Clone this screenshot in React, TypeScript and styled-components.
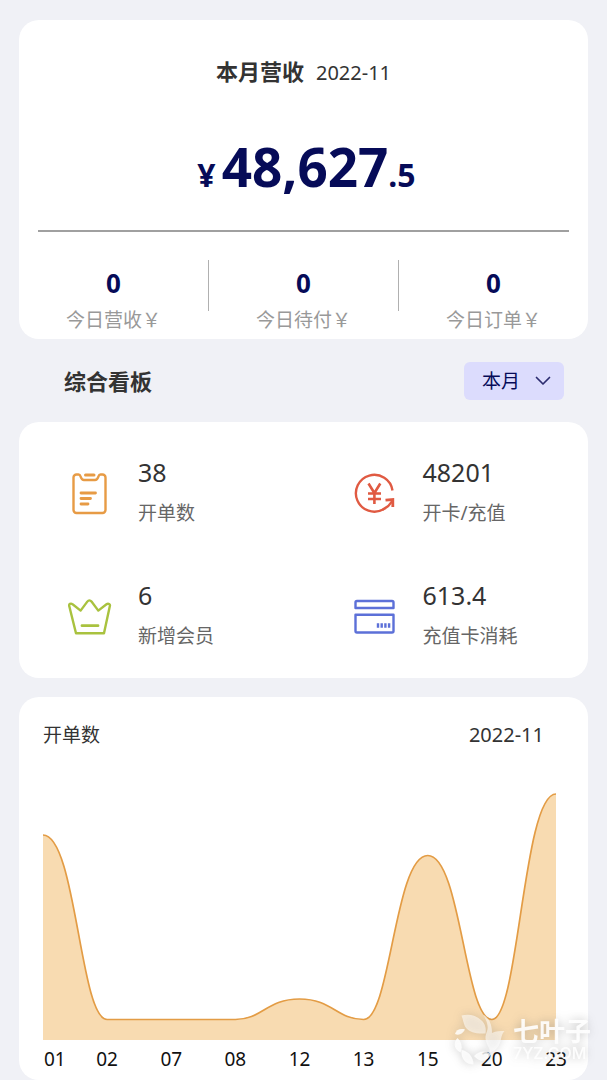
import React from "react";
import styled, { createGlobalStyle } from "styled-components";

const GlobalStyle = createGlobalStyle`
  * { box-sizing: border-box; }
  body {
    margin: 0;
    background: #f0f1f6;
    color: #333;
    font-family: "Noto Sans", "Noto Sans CJK SC", sans-serif;
  }
`;

const navy = "#060b58";

const Page = styled.main`
  padding: 20px 19px 0;
`;

const Card = styled.section`
  background: #fff;
  border-radius: 20px;
`;

const RevenueCard = styled(Card)`
  padding: 35px 0 3px;
`;

const RevenueTitle = styled.header`
  display: flex;
  justify-content: center;
  align-items: baseline;
  gap: 12px;
  line-height: 32px;
`;

const Heading = styled.h2`
  margin: 0;
  font-size: 22px;
  line-height: 32px;
  font-weight: 700;
`;

const Month = styled.time`
  font-size: 20px;
  line-height: 32px;
`;

const Amount = styled.p`
  display: flex;
  justify-content: center;
  align-items: baseline;
  margin: 43px 0 0;
  padding-left: 6px;
  color: ${navy};
  font-weight: 700;
  line-height: 70px;
`;

const AmountPart = styled.span<{ $size: number; $gap?: number }>`
  font-size: ${(p) => p.$size}px;
  margin-right: ${(p) => p.$gap ?? 0}px;
`;

const Rule = styled.hr`
  margin: 20px 19px 28px;
  border: 0;
  height: 2px;
  background: #a0a0a0;
`;

const TodayRow = styled.div`
  display: flex;
  align-items: flex-start;
`;

const TodayCell = styled.div`
  flex: 1;
  padding-top: 6px;
  text-align: center;
`;

const Divider = styled.span`
  width: 1px;
  height: 51px;
  background: #b0b0b0;
`;

const TodayValue = styled.div`
  color: ${navy};
  font-size: 26px;
  font-weight: 700;
  line-height: 34px;
`;

const TodayLabel = styled.div`
  color: #999;
  font-size: 19px;
  line-height: 32px;
  padding-top: 4px;
  white-space: nowrap;
`;

const BoardHeader = styled.header`
  display: flex;
  align-items: center;
  justify-content: space-between;
  height: 83px;
  padding: 0 24px 0 45px;
`;

const PeriodPicker = styled.label`
  display: grid;
  align-items: center;
  width: 100px;
  height: 38px;
  border-radius: 6px;
  background: #dcdcfd;

  & > * { grid-area: 1 / 1; }
  & > svg { justify-self: end; margin-right: 12px; pointer-events: none; }
`;

const PeriodSelect = styled.select`
  appearance: none;
  width: 100%;
  height: 100%;
  padding: 0 18px;
  border: 0;
  background: transparent;
  color: ${navy};
  font: inherit;
  font-size: 19px;
`;

const StatsCard = styled(Card)`
  display: grid;
  grid-template-columns: 1fr 1fr;
  row-gap: 41px;
  padding: 31px 0 20px;
`;

const Stat = styled.div`
  display: flex;
  align-items: center;
  gap: 26px;
  padding-left: 49px;
`;

const StatIcon = styled.svg`
  flex: none;
  width: 44px;
  height: 44px;
  fill: none;
  stroke-width: 2.4;
  stroke-linecap: round;
  stroke-linejoin: round;
`;

const StatValue = styled.div`
  font-size: 25px;
  line-height: 38px;
`;

const StatLabel = styled.div`
  color: #666;
  font-size: 19px;
  line-height: 44px;
  white-space: nowrap;
`;

const ChartCard = styled(Card)`
  margin-top: 19px;
  padding: 22px 32px 5px 24px;
`;

const ChartHeader = styled.header`
  display: flex;
  justify-content: space-between;
  padding-right: 12px;
  line-height: 32px;
`;

const ChartTitle = styled.h3`
  margin: 0;
  font-size: 19px;
  font-weight: 400;
`;

const Plot = styled.svg`
  display: block;
  width: 100%;
  height: 252px;
  margin-top: 37px;
`;

const Axis = styled.div`
  display: flex;
  justify-content: space-between;
  margin-right: -12px;
  padding-top: 3px;
  color: #111;
  font-size: 19px;
  line-height: 32px;
`;

const Tick = styled.span`
  width: 24px;
  text-align: center;

  &:first-child { width: 12px; padding-left: 1px; text-align: left; }
`;

const Watermark = styled.div`
  position: absolute;
  top: 1010px;
  right: 16px;
  display: flex;
  gap: 6px;
  color: rgba(255, 255, 255, 0.9);
  filter: drop-shadow(0 0 5px rgba(90, 90, 90, 0.4));
  pointer-events: none;
`;

const WatermarkText = styled.div`
  padding-top: 5px;
  font-size: 26px;
  font-weight: 700;
  line-height: 32px;

  small {
    display: block;
    font-family: Inter, sans-serif;
    font-size: 16px;
    font-weight: 500;
    line-height: 16px;
    margin-top: -2px;
  }
`;

const ClipboardIcon = () => (
  <StatIcon viewBox="0 0 44 44" stroke="#e79b45" aria-hidden="true">
    <path d="M8.5 2.500h2c1.600 0 1.800 1.200 2.300 2.600.7 2 1.500 2.900 3.200 2.900h11c1.700 0 2.500-.9 3.200-2.900.5-1.400.7-2.600 2.300-2.600h2a3 3 0 0 1 3 3v32.500a3 3 0 0 1-3 3h-26a3 3 0 0 1-3-3V5.500a3 3 0 0 1 3-3z" />
    <path d="M17.500 3h8.500" strokeWidth="3" />
    <path d="M13 21h14.500M13 26.500h9.500M13 32h7" strokeWidth="2.800" />
  </StatIcon>
);

const RechargeIcon = () => (
  <StatIcon viewBox="0 0 44 44" stroke="#e05a42" aria-hidden="true">
    <path d="M39.500 18.500A18.400 18.400 0 1 0 30.500 37.200" strokeLinecap="butt" />
    <path d="M30.500 37.200Q36 34.500 38.500 30" />
    <path d="M32.500 28.200l7.300-.7v7.500" strokeLinecap="butt" strokeLinejoin="miter" strokeWidth="2.800" />
    <path d="M15.500 11.500l5.900 9.500 5.900-9.500M21.400 21v11M15 21.500h13M15 27h13" strokeLinecap="butt" strokeWidth="2.600" />
  </StatIcon>
);

const CrownIcon = () => (
  <StatIcon viewBox="0 0 44 44" stroke="#a9c23f" aria-hidden="true">
    <path d="M8 38.300L1.300 11.300c-.7-2.300 1.500-3.500 3.300-2l8 6.300 6.700-9c1.300-1.700 2.900-1.700 4.200 0l6.800 9 8.200-6.300c1.800-1.400 4-.2 3.300 2L36 38.300z" />
    <path d="M14 30.700h16" strokeWidth="2.800" />
  </StatIcon>
);

const BankCardIcon = () => (
  <StatIcon viewBox="0 0 44 44" stroke="#5c70d8" aria-hidden="true">
    <path d="M2.500 13V7.500a1.500 1.500 0 0 1 1.500-1.500h35a1.500 1.500 0 0 1 1.500 1.500V13zM2.500 19.700h38v16.300a1.500 1.500 0 0 1-1.500 1.500H4a1.500 1.500 0 0 1-1.500-1.500z" />
    <path d="M25 28.300v4.500M28.700 28.300v4.500M32.400 28.300v4.500M36.100 28.300v4.500" strokeLinecap="butt" />
  </StatIcon>
);

const today = [
  { label: "今日营收￥", value: 0 },
  { label: "今日待付￥", value: 0 },
  { label: "今日订单￥", value: 0 },
];

const stats = [
  { value: "38", label: "开单数", Icon: ClipboardIcon },
  { value: "48201", label: "开卡/充值", Icon: RechargeIcon },
  { value: "6", label: "新增会员", Icon: CrownIcon },
  { value: "613.4", label: "充值卡消耗", Icon: BankCardIcon },
];

const orders = [
  { day: "01", count: 10 },
  { day: "02", count: 1 },
  { day: "07", count: 1 },
  { day: "08", count: 1 },
  { day: "12", count: 2 },
  { day: "13", count: 1 },
  { day: "15", count: 9 },
  { day: "20", count: 1 },
  { day: "23", count: 12 },
];

const STEP = 64;
const BASE = 252;
const UNIT = 20.5;

// Peaks get a longer handle than troughs, so crests are rounder than dips.
const curve = orders.reduce((path, { count }, i) => {
  const x = i * STEP;
  const y = BASE - count * UNIT;
  if (i === 0) return `M${x} ${y}`;
  const prev = orders[i - 1].count;
  const prevY = BASE - prev * UNIT;
  const out = prev > count ? 33 : 27;
  const into = count > prev ? 33 : 27;
  return `${path}C${x - STEP + out} ${prevY} ${x - into} ${y} ${x} ${y}`;
}, "");

const plotWidth = (orders.length - 1) * STEP;

export default function App() {
  return (
    <>
      <GlobalStyle />
      <Page>
        <RevenueCard>
          <RevenueTitle>
            <Heading>本月营收</Heading>
            <Month>2022-11</Month>
          </RevenueTitle>
          <Amount>
            <AmountPart $size={32} $gap={6}>¥</AmountPart>
            <AmountPart $size={53}>48,627</AmountPart>
            <AmountPart $size={32}>.5</AmountPart>
          </Amount>
          <Rule />
          <TodayRow>
            {today.map((item, i) => (
              <React.Fragment key={item.label}>
                {i > 0 && <Divider />}
                <TodayCell>
                  <TodayValue>{item.value}</TodayValue>
                  <TodayLabel>{item.label}</TodayLabel>
                </TodayCell>
              </React.Fragment>
            ))}
          </TodayRow>
        </RevenueCard>

        <BoardHeader>
          <Heading>综合看板</Heading>
          <PeriodPicker>
            <PeriodSelect aria-label="时间范围" defaultValue="month">
              <option value="month">本月</option>
            </PeriodSelect>
            <svg width="18" height="12" viewBox="0 0 18 12" fill="none" stroke="#2c2c70" strokeWidth="1.700" strokeLinecap="round" strokeLinejoin="round" aria-hidden="true">
              <path d="M2.500 2.500l6.500 6.500 6.500-6.500" />
            </svg>
          </PeriodPicker>
        </BoardHeader>

        <StatsCard>
          {stats.map(({ value, label, Icon }) => (
            <Stat key={label}>
              <Icon />
              <div>
                <StatValue>{value}</StatValue>
                <StatLabel>{label}</StatLabel>
              </div>
            </Stat>
          ))}
        </StatsCard>

        <ChartCard>
          <ChartHeader>
            <ChartTitle>开单数</ChartTitle>
            <Month>2022-11</Month>
          </ChartHeader>
          <Plot viewBox={`0 0 ${plotWidth} ${BASE}`} preserveAspectRatio="none" role="img" aria-label="开单数">
            <path d={`${curve}V${BASE}H0Z`} fill="#f8dbb1" />
            <path d={curve} fill="none" stroke="#e39c45" strokeWidth="1.700" vectorEffect="non-scaling-stroke" />
          </Plot>
          <Axis>
            {orders.map(({ day }) => (
              <Tick key={day}>{day}</Tick>
            ))}
          </Axis>
        </ChartCard>
      </Page>

      <Watermark>
        <svg width="56" height="58" viewBox="0 0 56 58" fill="currentColor" fillOpacity="0.6" aria-hidden="true">
          <path d="M10.500 5.500C17 3.500 25 5 30 10c4 3.500 5.500 8 4.500 13.500-9 .5-17-1-20.500-7-1.500-3-2-7-3.500-11z" />
          <path d="M32 4.500c6 3 9 10 9 18.500 4-2 8-2 12.500-2-3 3-3 7-4.500 12-2 5-5 8-10 9.500 0-5-4-8-4.500-14-.3-5 3-8 2-13-.5-4-2-7-4.500-11z" />
          <path d="M4 24c1-4 5-6 10-4.500-2 4-6 6.500-10 4.500z" fillOpacity="0.9" />
          <path d="M6.500 28c4 4 5.500 9 3 14.500-6-3-8-9-3-14.500z" fillOpacity="0.9" />
          <path d="M10.500 40c7 1 12 7 12 14.500-8 0-13-6-12-14.500z" fillOpacity="0.9" />
          <path d="M23 46c5-5 10-6 17-2-4 8-11 9-17 2z" fillOpacity="0.9" />
        </svg>
        <WatermarkText>
          七叶子
          <small>7YZ.COM</small>
        </WatermarkText>
      </Watermark>
    </>
  );
}
